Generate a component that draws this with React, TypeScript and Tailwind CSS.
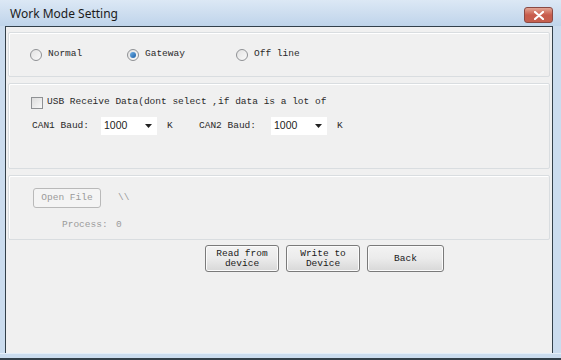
import React, { useState } from 'react';

const mono = "font-['Liberation_Mono','DejaVu_Sans_Mono',monospace] text-[9.5px]";

function Radio({ label, checked, width, onSelect }: { label: string; checked: boolean; width: string; onSelect: () => void }) {
  return (
    <div className={`flex items-center ${width}`} onClick={onSelect}>
      <span className="flex h-[12px] w-[12px] items-center justify-center rounded-full border border-[#8f9194] bg-gradient-to-br from-[#e2e2e2] to-[#fafafa]">
        {checked && <span className="h-[6px] w-[6px] rounded-full bg-gradient-to-br from-[#6fb1e8] to-[#1b5fa6]" />}
      </span>
      <span className={`ml-[6px] text-[#2a2a2a] ${mono}`}>{label}</span>
    </div>
  );
}

function Combo({ value }: { value: string }) {
  return (
    <div className="flex h-[18px] w-[56px] items-center justify-between bg-white pl-[3px] pr-[5px]">
      <span className="font-['Liberation_Sans',sans-serif] text-[10.5px] text-[#222]">{value}</span>
      <svg width="7" height="4" viewBox="0 0 7 4">
        <path d="M0 0h7L3.5 4z" fill="#222" />
      </svg>
    </div>
  );
}

function PushButton({ lines, width }: { lines: string[]; width: string }) {
  return (
    <button
      className={`flex h-[27px] ${width} flex-col items-center justify-center rounded-[3px] border border-[#7a7a7a] bg-gradient-to-b from-[#f3f3f3] via-[#ebebeb] to-[#d8d8d8] leading-[10px] text-[#1a1a1a] shadow-[inset_0_0_0_1px_#fbfbfb] ${mono}`}
    >
      {lines.map((l) => (
        <span key={l}>{l}</span>
      ))}
    </button>
  );
}

export default function App() {
  const [mode, setMode] = useState('gateway');

  return (
    <div className="flex h-[360px] w-[561px] flex-col overflow-hidden bg-[#c9dbee] font-['Noto_Sans',sans-serif]">
      {/* Title bar */}
      <div className="flex h-[26px] shrink-0 justify-between bg-gradient-to-b from-[#dce8f5] to-[#bfd4ea] pl-[10px] pr-[8px]">
        <span className="mt-[5px] text-[12px] text-[#1b1b1b]">Work Mode Setting</span>
        <div className="mt-[7px] flex h-[16px] w-[29px] items-center justify-center rounded-[3px] border border-[#8a4a44] bg-gradient-to-b from-[#e2a595] via-[#c85c4c] to-[#c5604f]">
          <svg width="10" height="9" viewBox="0 0 10 9">
            <path d="M1 1l8 7M9 1L1 8" stroke="#fff" strokeWidth="2.2" strokeLinecap="round" />
          </svg>
        </div>
      </div>

      {/* Frame + client */}
      <div className="flex flex-1">
        <div className="w-[5px] bg-[#cbdcee]" />
        <div className="flex flex-1 flex-col border-x border-t border-[#33404a] bg-[#f0f0f0] px-[2px] pt-[5px]">
          {/* Mode group */}
          <div className="flex h-[45px] items-center rounded-[2px] border border-[#d9dde0] pl-[21px] shadow-[inset_1px_1px_0_#fff]">
            <Radio label="Normal" checked={mode === 'normal'} width="w-[97px]" onSelect={() => setMode('normal')} />
            <Radio label="Gateway" checked={mode === 'gateway'} width="w-[109px]" onSelect={() => setMode('gateway')} />
            <Radio label="Off line" checked={mode === 'offline'} width="w-[100px]" onSelect={() => setMode('offline')} />
          </div>

          {/* CAN group */}
          <div className="mt-[6px] flex h-[86px] flex-col rounded-[2px] border border-[#d9dde0] pt-[12px] shadow-[inset_1px_1px_0_#fff]">
            <div className="flex h-[13px] items-center pl-[22px]">
              <span className="h-[12px] w-[12px] border border-[#8f9194] bg-gradient-to-br from-[#dcdcdc] to-[#f8f8f8]" />
              <span className={`ml-[4px] text-[#2a2a2a] ${mono}`}>USB Receive Data(dont select ,if data is a lot of</span>
            </div>
            <div className={`mt-[8px] flex items-center pl-[23px] text-[#2a2a2a] ${mono}`}>
              <span className="w-[69px]">CAN1 Baud:</span>
              <Combo value="1000" />
              <span className="ml-[10px] w-[32px]">K</span>
              <span className="w-[72px]">CAN2 Baud:</span>
              <Combo value="1000" />
              <span className="ml-[10px]">K</span>
            </div>
          </div>

          {/* File group */}
          <div className="mt-[6px] flex h-[65px] flex-col rounded-[2px] border border-[#d9dde0] pt-[12px] shadow-[inset_1px_1px_0_#fff]">
            <div className="flex items-center pl-[24px]">
              <div className={`flex h-[20px] w-[68px] items-center justify-center rounded-[3px] border border-[#b9b9b9] bg-[#f4f4f4] text-[#9a9a9a] ${mono}`}>
                Open File
              </div>
              <span className={`ml-[17px] text-[#9a9a9a] ${mono}`}>\\</span>
            </div>
            <div className={`mt-[10px] flex items-center pl-[53px] text-[#9a9a9a] ${mono}`}>
              <span className="w-[54px]">Process:</span>
              <span>0</span>
            </div>
          </div>

          {/* Buttons */}
          <div className="mt-[5px] flex gap-[7px] pl-[197px]">
            <PushButton lines={['Read from', 'device']} width="w-[74px]" />
            <PushButton lines={['Write to', 'Device']} width="w-[74px]" />
            <PushButton lines={['Back']} width="w-[77px]" />
          </div>
        </div>
        <div className="w-[8px] bg-[#cbdcee]" />
      </div>
      <div className="h-[7px] shrink-0 border-t border-[#e4eef8] bg-[#cbdcee] shadow-[inset_0_-2px_0_#33404a]" />
    </div>
  );
}
